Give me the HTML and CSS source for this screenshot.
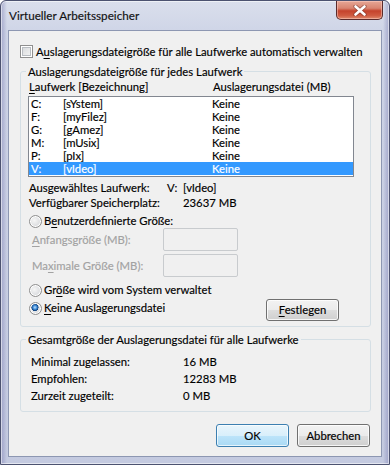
FILE: index.html
```html
<!DOCTYPE html>
<html lang="de">
<head>
<meta charset="utf-8">
<title>Virtueller Arbeitsspeicher</title>
<link rel="stylesheet" href="styles.css">
</head>
<body>
<div class="window">
  <div class="titlebar">
    <span class="title">Virtueller Arbeitsspeicher</span>
    <div class="close">
      <svg width="14" height="11" viewBox="0 0 14 11">
        <path d="M2.5 1.5 L11.5 9.5 M11.5 1.5 L2.5 9.5" stroke="#6a2a22" stroke-width="4.2" stroke-linecap="round" opacity="0.55"/>
        <path d="M2.5 1.5 L11.5 9.5 M11.5 1.5 L2.5 9.5" stroke="#ffffff" stroke-width="2.6" stroke-linecap="round"/>
      </svg>
    </div>
  </div>
  <div class="client">
    <div class="auto">
      <span class="checkbox"></span>
      <span>A<u>u</u>slagerungsdateigröße für alle Laufwerke automatisch verwalten</span>
    </div>

    <fieldset class="group g1">
      <legend>Auslagerungsdateigröße für jedes Laufwerk</legend>
      <div class="listhead">
        <span class="lh1"><u>L</u>aufwerk [Bezeichnung]</span>
        <span>Auslagerungsdatei (MB)</span>
      </div>
      <div class="listbox">
        <div class="row"><span class="c1">C:</span><span class="c2">[sYstem]</span><span>Keine</span></div>
        <div class="row"><span class="c1">F:</span><span class="c2">[myFilez]</span><span>Keine</span></div>
        <div class="row"><span class="c1">G:</span><span class="c2">[gAmez]</span><span>Keine</span></div>
        <div class="row"><span class="c1">M:</span><span class="c2">[mUsix]</span><span>Keine</span></div>
        <div class="row"><span class="c1">P:</span><span class="c2">[pIx]</span><span>Keine</span></div>
        <div class="row selected"><span class="c1">V:</span><span class="c2">[vIdeo]</span><span>Keine</span></div>
      </div>
      <div class="info">
        <span>Ausgewähltes Laufwerk:</span><span><span class="drv">V:</span>[vIdeo]</span>
        <span>Verfügbarer Speicherplatz:</span><span class="free">23637 MB</span>
      </div>
      <div class="radio r1"><span class="rb"></span><span>B<u>e</u>nutzerdefinierte Größe:</span></div>
      <div class="field f1"><span class="dis"><u>A</u>nfangsgröße (MB):</span><span class="input"></span></div>
      <div class="field f2"><span class="dis">Ma<u>x</u>imale Größe (MB):</span><span class="input"></span></div>
      <div class="radio r2"><span class="rb"></span><span>Gr<u>ö</u>ße wird vom System verwaltet</span></div>
      <div class="setrow">
        <div class="radio r3"><span class="rb on"></span><span><u>K</u>eine Auslagerungsdatei</span></div>
        <button class="btn set"><u>F</u>estlegen</button>
      </div>
    </fieldset>

    <fieldset class="group g2">
      <legend>Gesamtgröße der Auslagerungsdatei für alle Laufwerke</legend>
      <div class="totals">
        <span>Minimal zugelassen:</span><span>16 MB</span>
        <span>Empfohlen:</span><span>12283 MB</span>
        <span>Zurzeit zugeteilt:</span><span>0 MB</span>
      </div>
    </fieldset>

    <div class="buttons">
      <button class="btn default">OK</button>
      <button class="btn">Abbrechen</button>
    </div>
  </div>
</div>
</body>
</html>
```

FILE: styles.css
```css
* { box-sizing: border-box; }

body {
  margin: 0;
  font-family: Lato, "Noto Sans", sans-serif;
  font-size: 11.3px;
  color: #000;
  background: #fff;
  white-space: nowrap;
  -webkit-text-stroke: 0.15px currentColor;
}

u {
  text-decoration-thickness: 1px;
  text-underline-offset: 2px;
}

.window {
  width: 390px;
  height: 465px;
  border: 1px solid #4c5270;
  border-radius: 6px 6px 0 0;
  padding: 0 7px 7px 7px;
  display: flex;
  flex-direction: column;
  background:
    linear-gradient(to right, rgba(110,112,170,0.45) 0, rgba(110,112,170,0) 6px, rgba(110,112,170,0) 382px, rgba(110,112,170,0.45) 388px),
    linear-gradient(to bottom, #dadfec 0, #cfd5e7 30px, #c4cae0 100%);
  box-shadow: inset 0 0 0 1px rgba(255,255,255,0.55);
}

.titlebar {
  height: 29px;
  display: flex;
  align-items: flex-start;
}

.title {
  margin: 6px 0 0 1px;
  line-height: 16px;
  font-size: 11.7px;
  color: #111;
}

.close {
  margin-left: auto;
  margin-right: -1px;
  width: 47px;
  height: 19px;
  border: 1px solid #5a2b2b;
  border-top: none;
  border-radius: 0 0 5px 5px;
  background: linear-gradient(to bottom, #e6a796 0, #d88470 40%, #c5432c 55%, #cf5a40 80%, #de8a6c 100%);
  box-shadow: inset 0 0 0 1px rgba(255,210,200,0.5);
  display: flex;
  align-items: center;
  justify-content: center;
}

.client {
  flex: 1;
  background: #f0f0f0;
  border: 1px solid #8d97b2;
  display: flex;
  flex-direction: column;
}

.auto {
  display: flex;
  align-items: center;
  gap: 3px;
  height: 13px;
  margin: 14px 0 0 11px;
  line-height: 15px;
}

.checkbox {
  width: 13px;
  height: 13px;
  flex: none;
  border: 1px solid #8f8f8f;
  background: linear-gradient(135deg, #d4d6d9 0, #f7f7f7 100%);
  box-shadow: inset 0 0 0 1px #fff, inset 0 0 0 2px #b9bdc2;
}

.group {
  margin: 6px 10px 0 11px;
  padding: 0;
  min-width: 0;
  border: 1px solid #d5dfe5;
  border-radius: 3px;
}

.group legend {
  margin-left: 5px;
  padding: 0 2px;
  line-height: 15px;
}

.listhead {
  display: flex;
  line-height: 15px;
  padding-left: 8px;
}

.lh1 { width: 184px; }

.listbox {
  margin: 2px 0 0 7px;
  width: 326px;
  height: 81px;
  background: #fff;
  border: 1px solid #828790;
}

.row {
  display: flex;
  height: 13px;
  line-height: 13px;
  padding-left: 2px;
}

.row .c1 { width: 32px; }
.row .c2 { width: 149px; }

.row.selected {
  background: #3399ff;
  color: #fff;
}

.info {
  display: grid;
  grid-template-columns: 138px auto;
  line-height: 15px;
  margin: 3px 0 0 8px;
}

.info .drv {
  display: inline-block;
  width: 16px;
}

.info .free { padding-left: 16px; }

.radio {
  display: flex;
  align-items: center;
  gap: 2px;
  height: 14px;
  line-height: 14px;
  padding-left: 8px;
}

.r1 { margin-top: 4px; }
.r2 { margin-top: 6px; }

.rb {
  width: 13px;
  height: 13px;
  flex: none;
  border-radius: 50%;
  border: 1px solid #8f8f8f;
  background: radial-gradient(circle at 40% 40%, #f6f6f6 0, #d8dadd 70%, #c9ccd0 100%);
  box-shadow: inset 0 0 0 1px #fff;
}

.rb.on {
  background:
    radial-gradient(circle at 45% 40%, #bfe2ff 0, #3d8ad6 22%, #0c3e7a 38%, rgba(12,62,122,0) 42%),
    radial-gradient(circle at 40% 40%, #f6f6f6 0, #d8dadd 70%, #c9ccd0 100%);
}

.field {
  display: flex;
  align-items: center;
  height: 23px;
  padding-left: 11px;
}

.f2 { margin-top: 3px; }

.dis {
  width: 131px;
  color: #a2a2a2;
}

.input {
  width: 75px;
  height: 23px;
  border: 1px solid #c8cbce;
  border-radius: 2px;
  background: #f0f0f0;
}

.setrow {
  display: flex;
  align-items: flex-start;
  margin-top: 1px;
  padding: 0 31px 5px 0;
}

.r3 { margin-top: 3px; }

.btn {
  font-family: inherit;
  font-size: inherit;
  color: #000;
  width: 73px;
  height: 22px;
  padding: 0;
  border: 1px solid #707070;
  border-radius: 3px;
  background: linear-gradient(to bottom, #f2f2f2 0, #ebebeb 50%, #dddddd 51%, #cfcfcf 100%);
  box-shadow: inset 0 0 0 1px rgba(255,255,255,0.8);
  line-height: 18px;
}

.set {
  margin: 1px 0 0 auto;
}

.g2 { margin-top: 5px; }

.totals {
  display: grid;
  grid-template-columns: 152px auto;
  grid-auto-rows: 17px;
  line-height: 17px;
  margin-top: 6px;
  padding: 0 0 7px 10px;
}

.buttons {
  display: flex;
  justify-content: flex-end;
  gap: 8px;
  margin: 12px 11px 0 0;
}

.buttons .btn { height: 23px; }

.btn.default {
  border-color: #3c7fb1;
  background: linear-gradient(to bottom, #e9f5fc 0, #d9effb 50%, #bde4fa 51%, #a9d9f4 100%);
  box-shadow: inset 0 0 0 1px rgba(255,255,255,0.7);
}
```
